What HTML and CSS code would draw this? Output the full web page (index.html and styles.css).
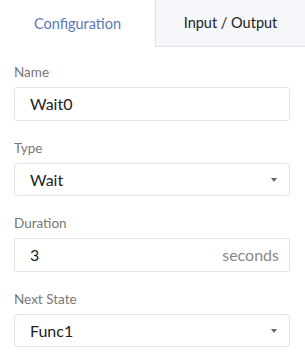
FILE: index.html
```html
<!DOCTYPE html>
<html>
<head>
<meta charset="utf-8">
<link rel="stylesheet" href="styles.css">
</head>
<body>
<div class="panel">
  <div class="tabs">
    <div class="tab active">Configuration</div>
    <div class="tab">Input / Output</div>
  </div>
  <div class="form">
    <div class="field">
      <div class="label">Name</div>
      <div class="control">Wait0</div>
    </div>
    <div class="field">
      <div class="label">Type</div>
      <div class="control select">Wait<span class="caret"></span></div>
    </div>
    <div class="field">
      <div class="label">Duration</div>
      <div class="control">3<span class="suffix">seconds</span></div>
    </div>
    <div class="field">
      <div class="label">Next State</div>
      <div class="control select">Func1<span class="caret"></span></div>
    </div>
  </div>
</div>
</body>
</html>
```
FILE: styles.css
```css
* { box-sizing: border-box; }
html, body { margin: 0; padding: 0; background: #fff; }
body { font-family: Lato, "Open Sans", sans-serif; width: 305px; height: 358px; overflow: hidden; }
.tabs { display: flex; height: 47px; }
.tab { flex: 1; display: flex; align-items: center; justify-content: center; font-size: 14.5px; color: #222; padding-bottom: 1px; }
.tab.active { color: #5b79b4; flex: 0 0 155px; }
.tab:not(.active) { background: #f5f7fb; border-left: 1px solid #dfe2e8; border-bottom: 1px solid #dfe2e8; }
.form { padding: 16px 15px 0 14px; display: flex; flex-direction: column; gap: 18px; }
.label { font-size: 13.5px; color: #777; line-height: 18px; margin-bottom: 6px; }
.control { height: 33.5px; border: 1px solid #e3e3e3; border-radius: 3px; padding: 0 10px 0 15px; display: flex; align-items: center; font-size: 16px; color: #222; }
.suffix { margin-left: auto; color: #888; }
.caret { margin-left: auto; margin-right: 2px; margin-top: 2px; width: 0; height: 0; border-left: 3.5px solid transparent; border-right: 3.5px solid transparent; border-top: 4px solid #666; }
```
